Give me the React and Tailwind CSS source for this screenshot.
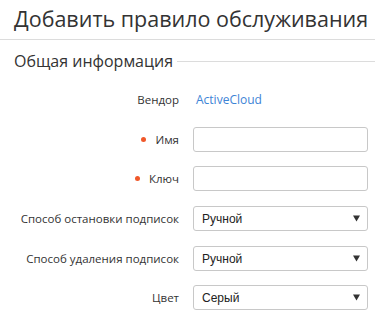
import React from "react";

const font = { fontFamily: '"Open Sans", "DejaVu Sans", sans-serif' };

function Label({ children, required }) {
  return (
    <div className="w-[179px] shrink-0 flex items-center justify-end text-[11.5px] text-[#333]">
      {required && <span className="w-[5px] h-[5px] rounded-full bg-[#f0582a] mr-[9px]" />}
      <span>{children}</span>
    </div>
  );
}

function Input() {
  return <div className="flex-1 h-[25px] border border-[#c8c8c8] rounded-[3px] bg-white" />;
}

function Select({ value }) {
  return (
    <div className="flex-1 h-[25px] border border-[#c8c8c8] rounded-[3px] bg-white flex items-center justify-between pl-[8px] pr-[7px]">
      <span className="text-[12px] text-[#222]" style={{ fontFamily: '"Liberation Sans", Arial, sans-serif' }}>
        {value}
      </span>
      <svg width="7" height="7" viewBox="0 0 7 7">
        <polygon points="0,0.5 7,0.5 3.5,6.5" fill="#333" />
      </svg>
    </div>
  );
}

function Row({ label, required, children, className = "" }) {
  return (
    <div className={"flex items-center h-[25px] pr-[7px] " + className}>
      <Label required={required}>{label}</Label>
      <div className="ml-[14px] flex-1 flex">{children}</div>
    </div>
  );
}

export default function App() {
  return (
    <div className="w-[375px] h-[319px] bg-white overflow-hidden" style={font}>
      <div className="h-[40px] border-b border-[#dcdcdc] pl-[14px]">
        <h1 className="text-[21.5px] leading-[38px] text-[#333] whitespace-nowrap font-normal">
          Добавить правило обслуживания
        </h1>
      </div>
      <div className="mt-[9px] pl-[14px] flex items-center h-[24px]">
        <span className="text-[16px] leading-[24px] text-[#333] whitespace-nowrap">Общая информация</span>
        <div className="flex-1 h-px bg-[#dcdcdc] ml-[4px] mt-[1px]" />
      </div>
      <div className="flex flex-col">
        <Row label="Вендор" className="mt-[14px]">
          <span className="text-[12px] text-[#3d84d6] pl-[3px]">ActiveCloud</span>
        </Row>
        <Row label="Имя" required className="mt-[15px]">
          <Input />
        </Row>
        <Row label="Ключ" required className="mt-[14px]">
          <Input />
        </Row>
        <Row label="Способ остановки подписок" className="mt-[15px]">
          <Select value="Ручной" />
        </Row>
        <Row label="Способ удаления подписок" className="mt-[15px]">
          <Select value="Ручной" />
        </Row>
        <Row label="Цвет" className="mt-[14px]">
          <Select value="Серый" />
        </Row>
      </div>
    </div>
  );
}
